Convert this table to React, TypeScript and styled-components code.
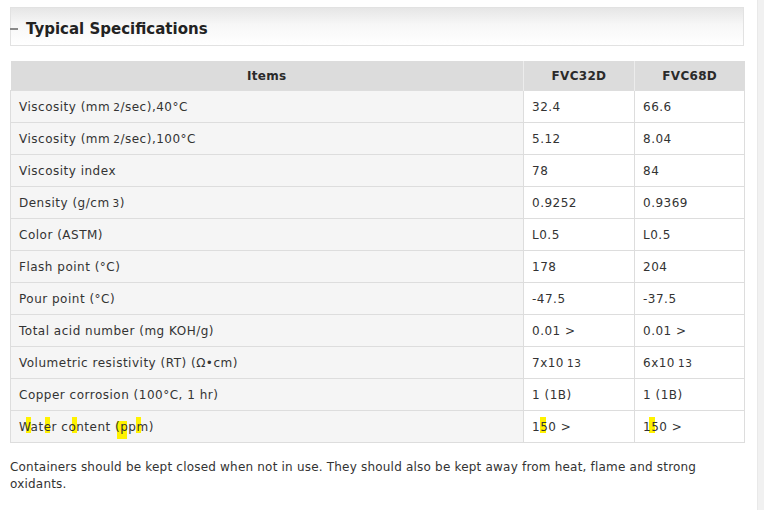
import React from "react";
import styled, { createGlobalStyle } from "styled-components";

const GlobalStyle = createGlobalStyle`
  html, body {
    margin: 0;
    padding: 0;
    background: #fff;
  }
  body {
    font-family: "DejaVu Sans", Verdana, sans-serif;
    color: #333;
  }
`;

const Page = styled.div`
  display: flex;
  width: 764px;
  min-height: 510px;
`;

const Content = styled.div`
  width: 734px;
  padding: 7px 0 0 10px;
`;

const ScrollStrip = styled.div`
  margin-left: auto;
  width: 6px;
  background: #f1f1f1;
  border-left: 1px solid #e9e9e9;
`;

const SectionHeader = styled.div`
  display: flex;
  align-items: center;
  height: 39px;
  padding-top: 4px;
  box-sizing: border-box;
  border: 1px solid #e2e2e2;
  background: linear-gradient(to bottom, #e6e6e6 0%, #f7f7f7 45%, #ffffff 100%);
`;

const Dash = styled.span`
  width: 8px;
  height: 2px;
  margin: 0 8px 0 -1px;
  background: #8a8a8a;
`;

const Title = styled.h2`
  margin: 0;
  font-size: 15px;
  font-weight: bold;
  color: #222;
`;

const Table = styled.table`
  margin-top: 15px;
  width: 734px;
  border-collapse: collapse;
  font-size: 12px;
  letter-spacing: 0.5px;
  table-layout: fixed;
`;

const HeadCell = styled.th`
  height: 28px;
  padding: 1px 0 0;
  background: #dcdcdc;
  color: #2a2a2a;
  font-size: 12px;
  font-weight: bold;
  letter-spacing: 0.3px;
  text-align: center;
  border-left: 1px solid #ececec;
  &:first-child {
    border-left: none;
  }
`;

const Row = styled.tr`
  height: 32px;
`;

const LabelCell = styled.td`
  position: relative;
  padding: 1px 0 0 8px;
  background: #f5f5f5;
  border: 1px solid #dddddd;
`;

const ValueCell = styled.td`
  position: relative;
  padding: 1px 0 0 8px;
  background: #fff;
  border: 1px solid #dddddd;
`;

const Small = styled.span`
  font-size: 10.5px;
  margin-left: 3px;
`;

const Highlight = styled.span<{ $left: number; $top?: number; $w?: number; $h?: number }>`
  position: absolute;
  left: ${(p) => p.$left}px;
  top: ${(p) => p.$top ?? 6}px;
  width: ${(p) => p.$w ?? 5}px;
  height: ${(p) => p.$h ?? 16}px;
  background: #fff200;
  z-index: 0;
`;

const CellText = styled.span`
  position: relative;
  z-index: 1;
`;

const Note = styled.p`
  margin: 16px 0 0;
  width: 720px;
  font-size: 12px;
  line-height: 17px;
  letter-spacing: 0.2px;
  color: #333;
`;

type Spec = { label: React.ReactNode; a: React.ReactNode; b: React.ReactNode };

const specs: Spec[] = [
  { label: <>Viscosity (mm<Small>2</Small>/sec),40°C</>, a: "32.4", b: "66.6" },
  { label: <>Viscosity (mm<Small>2</Small>/sec),100°C</>, a: "5.12", b: "8.04" },
  { label: "Viscosity index", a: "78", b: "84" },
  { label: <>Density (g/cm<Small>3</Small>)</>, a: "0.9252", b: "0.9369" },
  { label: "Color (ASTM)", a: "L0.5", b: "L0.5" },
  { label: "Flash point (°C)", a: "178", b: "204" },
  { label: "Pour point (°C)", a: "-47.5", b: "-37.5" },
  { label: "Total acid number (mg KOH/g)", a: "0.01 >", b: "0.01 >" },
  { label: "Volumetric resistivity (RT) (Ω•cm)", a: <>7x10<Small>13</Small></>, b: <>6x10<Small>13</Small></> },
  { label: "Copper corrosion (100°C, 1 hr)", a: "1 (1B)", b: "1 (1B)" },
];

export default function App() {
  return (
    <>
      <GlobalStyle />
      <Page>
        <Content>
          <SectionHeader>
            <Dash />
            <Title>Typical Specifications</Title>
          </SectionHeader>

          <Table>
            <colgroup>
              <col style={{ width: 513 }} />
              <col style={{ width: 111 }} />
              <col style={{ width: 110 }} />
            </colgroup>
            <thead>
              <tr>
                <HeadCell>Items</HeadCell>
                <HeadCell>FVC32D</HeadCell>
                <HeadCell>FVC68D</HeadCell>
              </tr>
            </thead>
            <tbody>
              {specs.map((s, i) => (
                <Row key={i}>
                  <LabelCell>{s.label}</LabelCell>
                  <ValueCell>{s.a}</ValueCell>
                  <ValueCell>{s.b}</ValueCell>
                </Row>
              ))}
              <Row>
                <LabelCell>
                  <Highlight $left={15} />
                  <Highlight $left={34} />
                  <Highlight $left={61} />
                  <Highlight $left={106} $top={10} $w={10} $h={18} />
                  <Highlight $left={125} />
                  <CellText>Water content (ppm)</CellText>
                </LabelCell>
                <ValueCell>
                  <Highlight $left={16} $w={6} />
                  <CellText>150 &gt;</CellText>
                </ValueCell>
                <ValueCell>
                  <Highlight $left={14} $w={6} />
                  <CellText>150 &gt;</CellText>
                </ValueCell>
              </Row>
            </tbody>
          </Table>

          <Note>
            Containers should be kept closed when not in use. They should also be kept away from heat, flame and strong
            oxidants.
          </Note>
        </Content>
        <ScrollStrip />
      </Page>
    </>
  );
}
